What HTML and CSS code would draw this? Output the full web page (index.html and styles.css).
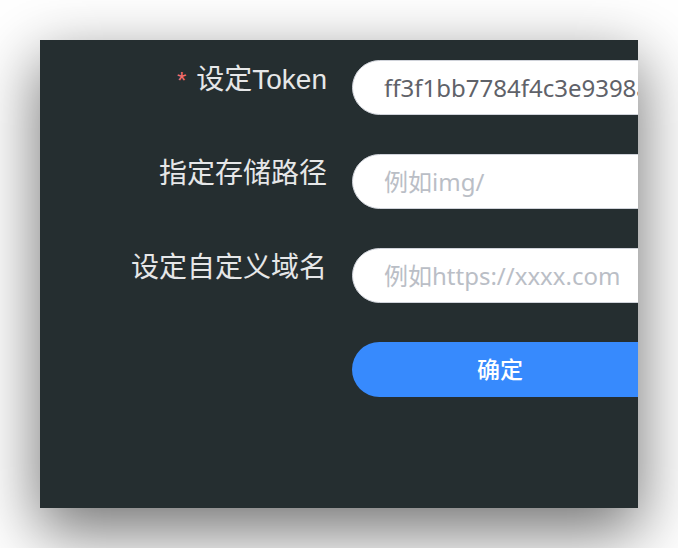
FILE: index.html
```html
<!DOCTYPE html>
<html lang="zh-CN">
<head>
<meta charset="utf-8">
<link rel="stylesheet" href="styles.css">
</head>
<body>
<div class="window">
  <form class="form">
    <label class="label"><span class="req">*</span>设定Token</label>
    <div class="field"><input class="input" type="text" value="ff3f1bb7784f4c3e9398a1c2d5e6f7"></div>
    <label class="label">指定存储路径</label>
    <div class="field"><input class="input" type="text" placeholder="例如img/"></div>
    <label class="label">设定自定义域名</label>
    <div class="field"><input class="input" type="text" placeholder="例如https://xxxx.com"></div>
    <div></div>
    <div class="field"><button class="btn" type="button">确定</button></div>
  </form>
</div>
</body>
</html>
```

FILE: styles.css
```css
html, body {
  margin: 0;
  padding: 0;
  background: #ffffff;
}
body {
  width: 678px;
  height: 548px;
  overflow: hidden;
  font-family: "Liberation Sans", "Noto Sans CJK SC", sans-serif;
}
.window {
  margin: 40px 0 0 40px;
  width: 598px;
  height: 468px;
  background: #252e30;
  overflow: hidden;
  box-shadow: 0 22px 60px 2px rgba(0, 0, 0, 0.55);
}
.form {
  display: grid;
  grid-template-columns: 287px 340px;
  column-gap: 25px;
  row-gap: 39px;
  padding-top: 20px;
}
.label {
  text-align: right;
  color: #e6e7e8;
  font-size: 28px;
  line-height: 40px;
  height: 55px;
  white-space: nowrap;
}
.req {
  color: #f56c6c;
  font-size: 24px;
  margin-right: 10px;
}
.field {
  height: 55px;
}
.input {
  box-sizing: border-box;
  width: 340px;
  height: 55px;
  border: 1.5px solid #d0d3da;
  border-radius: 28px;
  background: #ffffff;
  padding: 0 20px 0 31px;
  font-family: "Noto Sans", "Noto Sans CJK SC", sans-serif;
  font-size: 24px;
  color: #5f6269;
  outline: none;
}
.input::placeholder {
  color: #babec6;
}
.btn {
  box-sizing: border-box;
  width: 340px;
  height: 55px;
  border: none;
  border-radius: 28px;
  padding: 0 44px 4px 0;
  background: #378afd;
  color: #ffffff;
  font-family: "Liberation Sans", "Noto Sans CJK SC", sans-serif;
  font-size: 23px;
  font-weight: 500;
  cursor: pointer;
}
```
